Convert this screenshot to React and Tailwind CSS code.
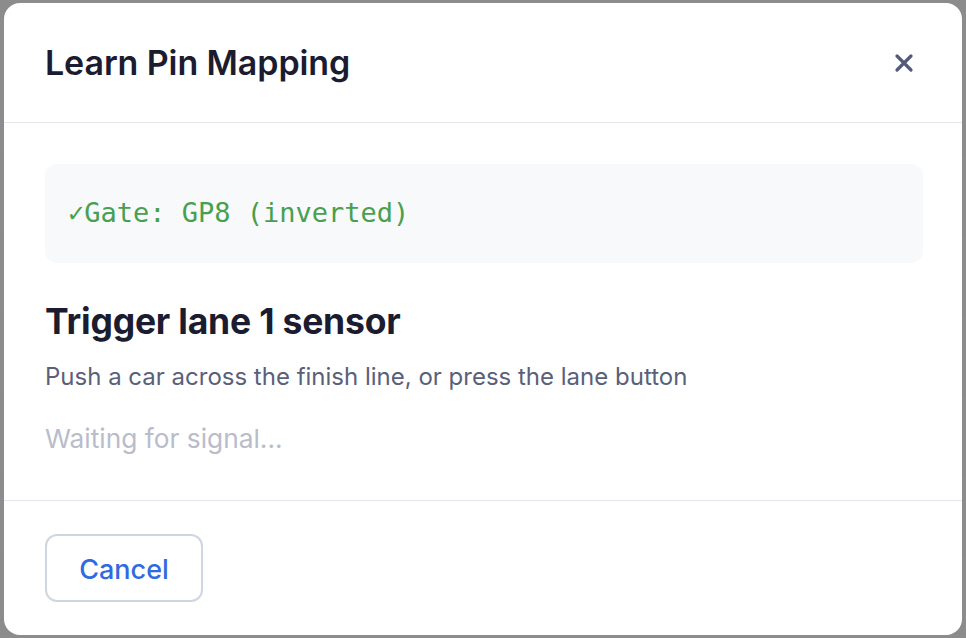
import React from 'react';

const rows = [0, 1, 2, 3, 4, 5, 6, 7];

export default function App() {
  return (
    <div className="relative w-[966px] h-[638px] overflow-hidden bg-[#8c8c8c]" style={{ fontFamily: 'Inter, "Noto Sans", sans-serif' }}>
      {/* page behind the backdrop */}
      <div className="flex flex-col pt-[74px]">
        {rows.map((r) => (
          <div key={r} className="h-[80px] border-b border-[#858a92]" />
        ))}
      </div>

      <div className="absolute inset-0 flex items-center justify-center">
        <div className="w-[958px] h-[632px] bg-white rounded-[16px] flex flex-col">
          <div className="h-[120px] flex items-center justify-between pl-[41px] pr-[48px] border-b border-[#e3e6ee]">
            <h2 className="text-[34px] font-semibold text-[#1b1c30] tracking-[-0.1px]">Learn Pin Mapping</h2>
            <svg width="20" height="20" viewBox="0 0 20 20" className="text-[#555a7a]">
              <path d="M3 3 L17 17 M17 3 L3 17" stroke="currentColor" strokeWidth="3.2" strokeLinecap="round" />
            </svg>
          </div>

          <div className="flex-1 pl-[41px] pr-[39px] pt-[41px] border-b border-[#e3e6ee]">
            <div className="h-[99px] rounded-[12px] bg-[#f8f9fb] flex items-center px-[23px]">
              <span className="text-[27px] text-[#47a04f]" style={{ fontFamily: '"DejaVu Sans Mono", monospace' }}>✓Gate: GP8 (inverted)</span>
            </div>
            <div className="mt-[37px] text-[35.5px] font-bold text-[#1b1c30] leading-[44px] tracking-[-0.2px]">Trigger lane 1 sensor</div>
            <div className="mt-[18px] text-[24px] text-[#5a5f7a] leading-[30px]">Push a car across the finish line, or press the lane button</div>
            <div className="mt-[31px] text-[26.3px] text-[#b9bccb] leading-[32px]">Waiting for signal...</div>
          </div>

          <div className="h-[134px] flex items-center px-[41px]">
            <button className="w-[158px] h-[68px] rounded-[12px] border-2 border-[#cfd6e2] text-[27px] font-medium text-[#2f6ae0] pt-[4px]">Cancel</button>
          </div>
        </div>
      </div>
    </div>
  );
}
